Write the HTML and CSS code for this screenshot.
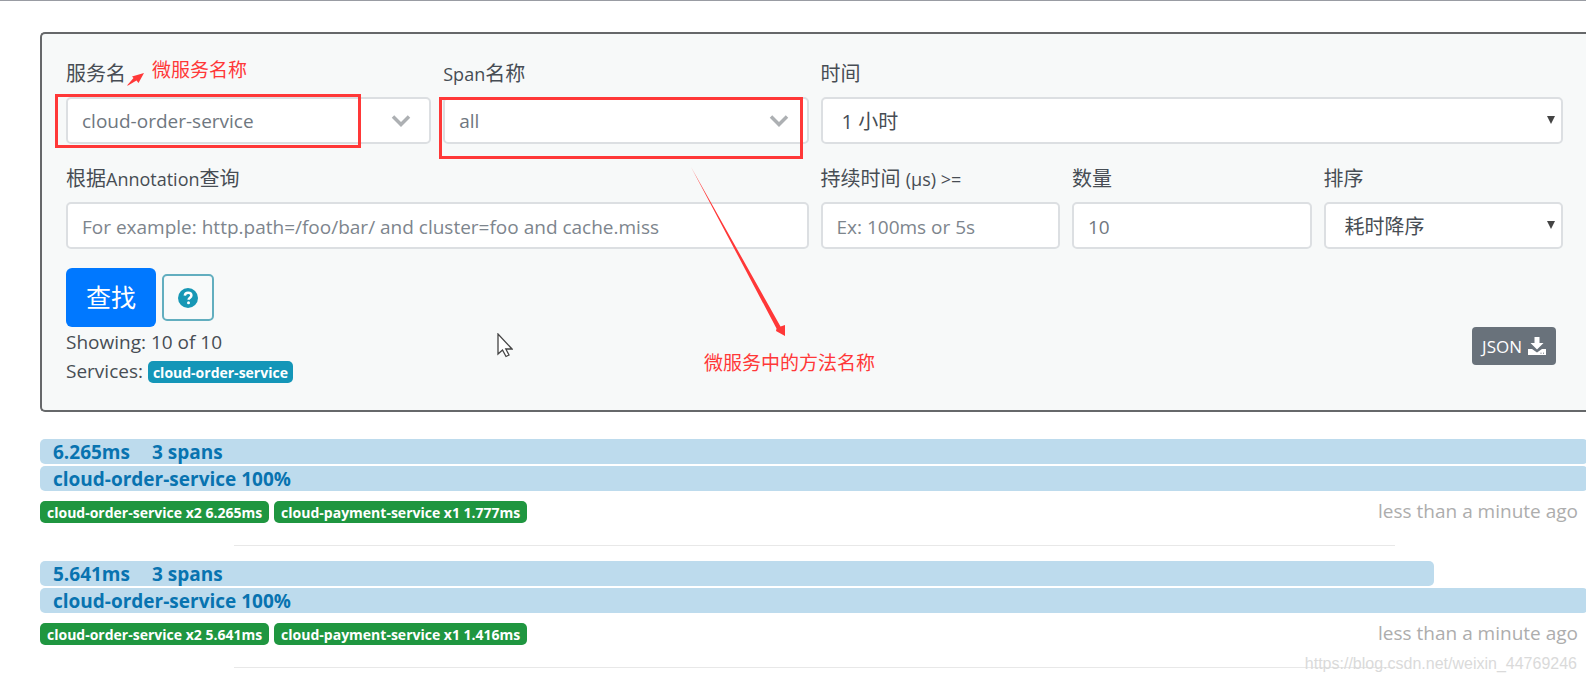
FILE: index.html
```html
<!DOCTYPE html>
<html lang="zh-CN">
<head>
<meta charset="utf-8">
<title>Zipkin</title>
<link rel="stylesheet" href="styles.css">
</head>
<body>
<main class="page">
  <form class="search">
    <div class="fields">
      <div class="field span-3">
        <label class="label" for="service">服务名</label>
        <div class="control">
          <select class="input combo" id="service"><option>cloud-order-service</option></select>
          <svg class="chevron" viewBox="0 0 20 14"><path d="M2 2.500l8 8 8-8" fill="none" stroke="#adb0b3" stroke-width="3.500"/></svg>
          <span class="mark mark-service"></span>
        </div>
        <span class="note note-service">微服务名称</span>
        <svg class="arrow-service" viewBox="0 0 18 13"><path d="M0 12.500L6.500 5 5 3.500 17 0 11.500 10 9.500 7.500 1 12.500z" fill="#ff3838"/></svg>
      </div>
      <div class="field span-3">
        <label class="label" for="span"><span class="latin">Span</span>名称</label>
        <div class="control">
          <select class="input combo" id="span"><option>all</option></select>
          <svg class="chevron" viewBox="0 0 20 14"><path d="M2 2.500l8 8 8-8" fill="none" stroke="#adb0b3" stroke-width="3.500"/></svg>
          <span class="mark mark-span"></span>
        </div>
      </div>
      <div class="field span-6">
        <label class="label" for="lookback">时间</label>
        <div class="control">
          <select class="input picker" id="lookback"><option>1 小时</option></select>
          <svg class="caret" viewBox="0 0 8 8"><path d="M0 0h8L4 8z" fill="#444"/></svg>
        </div>
      </div>
      <div class="field span-6">
        <label class="label" for="annotation">根据<span class="latin">Annotation</span>查询</label>
        <input class="input" id="annotation" type="text" placeholder="For example: http.path=/foo/bar/ and cluster=foo and cache.miss">
      </div>
      <div class="field span-2">
        <label class="label" for="duration">持续时间 <span class="latin">(μs) &gt;=</span></label>
        <input class="input" id="duration" type="text" placeholder="Ex: 100ms or 5s">
      </div>
      <div class="field span-2">
        <label class="label" for="limit">数量</label>
        <input class="input" id="limit" type="text" value="10">
      </div>
      <div class="field span-2">
        <label class="label" for="sort">排序</label>
        <div class="control">
          <select class="input picker" id="sort"><option>耗时降序</option></select>
          <svg class="caret" viewBox="0 0 8 8"><path d="M0 0h8L4 8z" fill="#444"/></svg>
        </div>
      </div>
    </div>
    <div class="actions">
      <button class="find" type="button">查找</button>
      <button class="help" type="button" aria-label="Help">
        <svg class="help-icon" viewBox="0 0 20 20"><circle cx="10" cy="10" r="10" fill="#1797b5"/><path d="M6.800 7.600C7 5.600 8.300 4.700 10.100 4.700c1.900 0 3.300 1 3.300 2.700 0 2.300-2.800 2.200-2.800 4.300" fill="none" stroke="#fff" stroke-width="2.500"/><circle cx="10.500" cy="14.800" r="1.500" fill="#fff"/></svg>
      </button>
    </div>
    <div class="summary">
      <div class="counts">
        <div class="line">Showing: 10 of 10</div>
        <div class="line">Services: <span class="badge badge-info">cloud-order-service</span></div>
      </div>
      <button class="json" type="button">JSON
        <svg class="json-icon" viewBox="0 0 18 18"><path d="M6.500 0h5v6h4L9 12.500 2.500 6h4zM0 12h4l5 3.500 5-3.500h4v6H0z" fill="#fff"/><path d="M12.500 16.200h1M15 16.200h1" stroke="#69727b"/></svg>
      </button>
    </div>
    <span class="note note-span">微服务中的方法名称</span>
    <svg class="arrow-span" viewBox="0 0 95 170"><path d="M0 0L85.500 161.500 85 164 94 169V158L89.500 159.500z" fill="#ff3838"/></svg>
    <svg class="pointer" viewBox="0 0 16 25"><path d="M1 1v20l4.500-4 3.500 6.500 3-1.500-3.200-6H15z" fill="#fff" stroke="#444" stroke-width="1.300"/></svg>
  </form>

  <section class="traces">
    <article class="trace">
      <div class="bar" style="width:100%"><span class="duration">6.265ms</span><span>3 spans</span></div>
      <div class="bar">cloud-order-service 100%</div>
      <div class="detail">
        <span class="badge badge-ok">cloud-order-service x2 6.265ms</span>
        <span class="badge badge-ok">cloud-payment-service x1 1.777ms</span>
        <time class="ago">less than a minute ago</time>
      </div>
      <hr class="rule">
    </article>
    <article class="trace">
      <div class="bar" style="width:90.04%"><span class="duration">5.641ms</span><span>3 spans</span></div>
      <div class="bar">cloud-order-service 100%</div>
      <div class="detail">
        <span class="badge badge-ok">cloud-order-service x2 5.641ms</span>
        <span class="badge badge-ok">cloud-payment-service x1 1.416ms</span>
        <time class="ago">less than a minute ago</time>
      </div>
      <hr class="rule">
    </article>
  </section>
</main>
<div class="watermark">https://blog.csdn.net/weixin_44769246</div>
</body>
</html>
```
FILE: styles.css
```css
* { box-sizing: border-box; }

body {
  margin: 0;
  background: #fff;
  color: #474d54;
  font-family: "Open Sans", "Noto Sans CJK SC", sans-serif;
  font-size: 19px;
  line-height: 29px;
}

.page {
  padding: 31px 0 0 40px;
  border-top: 1px solid #999ca3;
  overflow: hidden;
}

.search {
  position: relative;
  padding: 25px 23px 24px 24px;
  background: #f7f9f9;
  border: 2px solid #66686a;
  border-right: 0;
  border-radius: 5px 0 0 5px;
}

.fields {
  display: grid;
  grid-template-columns: repeat(12, minmax(0, 1fr));
  column-gap: 12px;
  row-gap: 20px;
}

.field { position: relative; }
.span-2 { grid-column: span 2; }
.span-3 { grid-column: span 3; }
.span-6 { grid-column: span 6; }

.label {
  display: block;
  height: 38px;
  font-size: 20px;
}

.latin { font-size: 18px; }

.control { position: relative; }

.input {
  display: block;
  width: 100%;
  height: 47px;
  padding: 2px 14px 0;
  background: #fff;
  border: 2px solid #dcdfe2;
  border-radius: 5px;
  color: #6f7780;
  font: inherit;
  appearance: none;
}

.input::placeholder { color: #7d858d; opacity: 1; }
.picker { padding-left: 19px; color: #474d54; font-size: 20px; }

.chevron {
  position: absolute;
  top: 17px;
  right: 20px;
  width: 20px;
  height: 14px;
}

.caret {
  position: absolute;
  top: 19px;
  right: 8px;
  width: 8px;
  height: 8px;
}

.mark {
  position: absolute;
  border: 3px solid #ff3838;
}

.mark-service { top: -3px; left: -11px; width: 306px; height: 54px; }
.mark-span { top: 0; left: -4px; width: 364px; height: 62px; }

.note {
  position: absolute;
  color: #ff3838;
  font-family: "Noto Sans CJK SC", sans-serif;
  font-size: 19px;
  white-space: nowrap;
}

.note-service { top: -5px; left: 86px; }
.note-span { top: 313px; left: 662px; }

.arrow-service {
  position: absolute;
  top: 14px;
  left: 61px;
  width: 18px;
  height: 13px;
}

.arrow-span {
  position: absolute;
  top: 133px;
  left: 649px;
  width: 95px;
  height: 170px;
}

.pointer {
  position: absolute;
  top: 299px;
  left: 455px;
  width: 16px;
  height: 25px;
}

.actions {
  display: flex;
  align-items: center;
  gap: 6px;
  margin-top: 19px;
}

.find {
  height: 59px;
  padding: 0 20px;
  background: #0078ff;
  border: 0;
  border-radius: 6px;
  color: #fff;
  font: inherit;
  font-size: 25px;
}

.help {
  display: flex;
  align-items: center;
  justify-content: center;
  width: 52px;
  height: 47px;
  padding: 0;
  background: #f8fafa;
  border: 2px solid #62aebf;
  border-radius: 5px;
}

.help-icon { width: 20px; height: 20px; }

.summary {
  display: flex;
  align-items: flex-start;
  justify-content: space-between;
}

.counts { padding-top: 1px; }

.json {
  display: flex;
  align-items: center;
  gap: 6px;
  height: 38px;
  margin-right: 7px;
  padding: 0 10px;
  background: #69727b;
  border: 0;
  border-radius: 4px;
  color: #fff;
  font: inherit;
  font-size: 17px;
}

.json-icon { width: 18px; height: 18px; }

.badge {
  display: inline-block;
  height: 22px;
  padding: 0 7px;
  border-radius: 5px;
  color: #fff;
  font-size: 14px;
  font-weight: 700;
  line-height: 23px;
  white-space: nowrap;
}

.badge-info { padding: 0 5px; background: #1496b8; }
.badge-ok { background: #1f9640; }

.traces {
  margin-right: -2px;
  padding-top: 27px;
}

.bar {
  height: 25px;
  margin-bottom: 2px;
  padding-left: 13px;
  background: #bddbed;
  border-radius: 5px;
  color: #0873b0;
  font-weight: 700;
  line-height: 26px;
  white-space: nowrap;
}

.duration { margin-right: 22px; }

.detail {
  display: flex;
  align-items: center;
  gap: 5px;
  height: 37px;
}

.ago {
  margin-left: auto;
  padding-right: 10px;
  color: #adadad;
}

.rule {
  width: 75%;
  margin: 15px auto;
  border: 0;
  border-top: 1px solid #e8e8e8;
}

.watermark {
  position: absolute;
  right: 9px;
  bottom: 8px;
  color: #dadada;
  font-family: "Liberation Sans", sans-serif;
  font-size: 16px;
  line-height: 20px;
}
```
